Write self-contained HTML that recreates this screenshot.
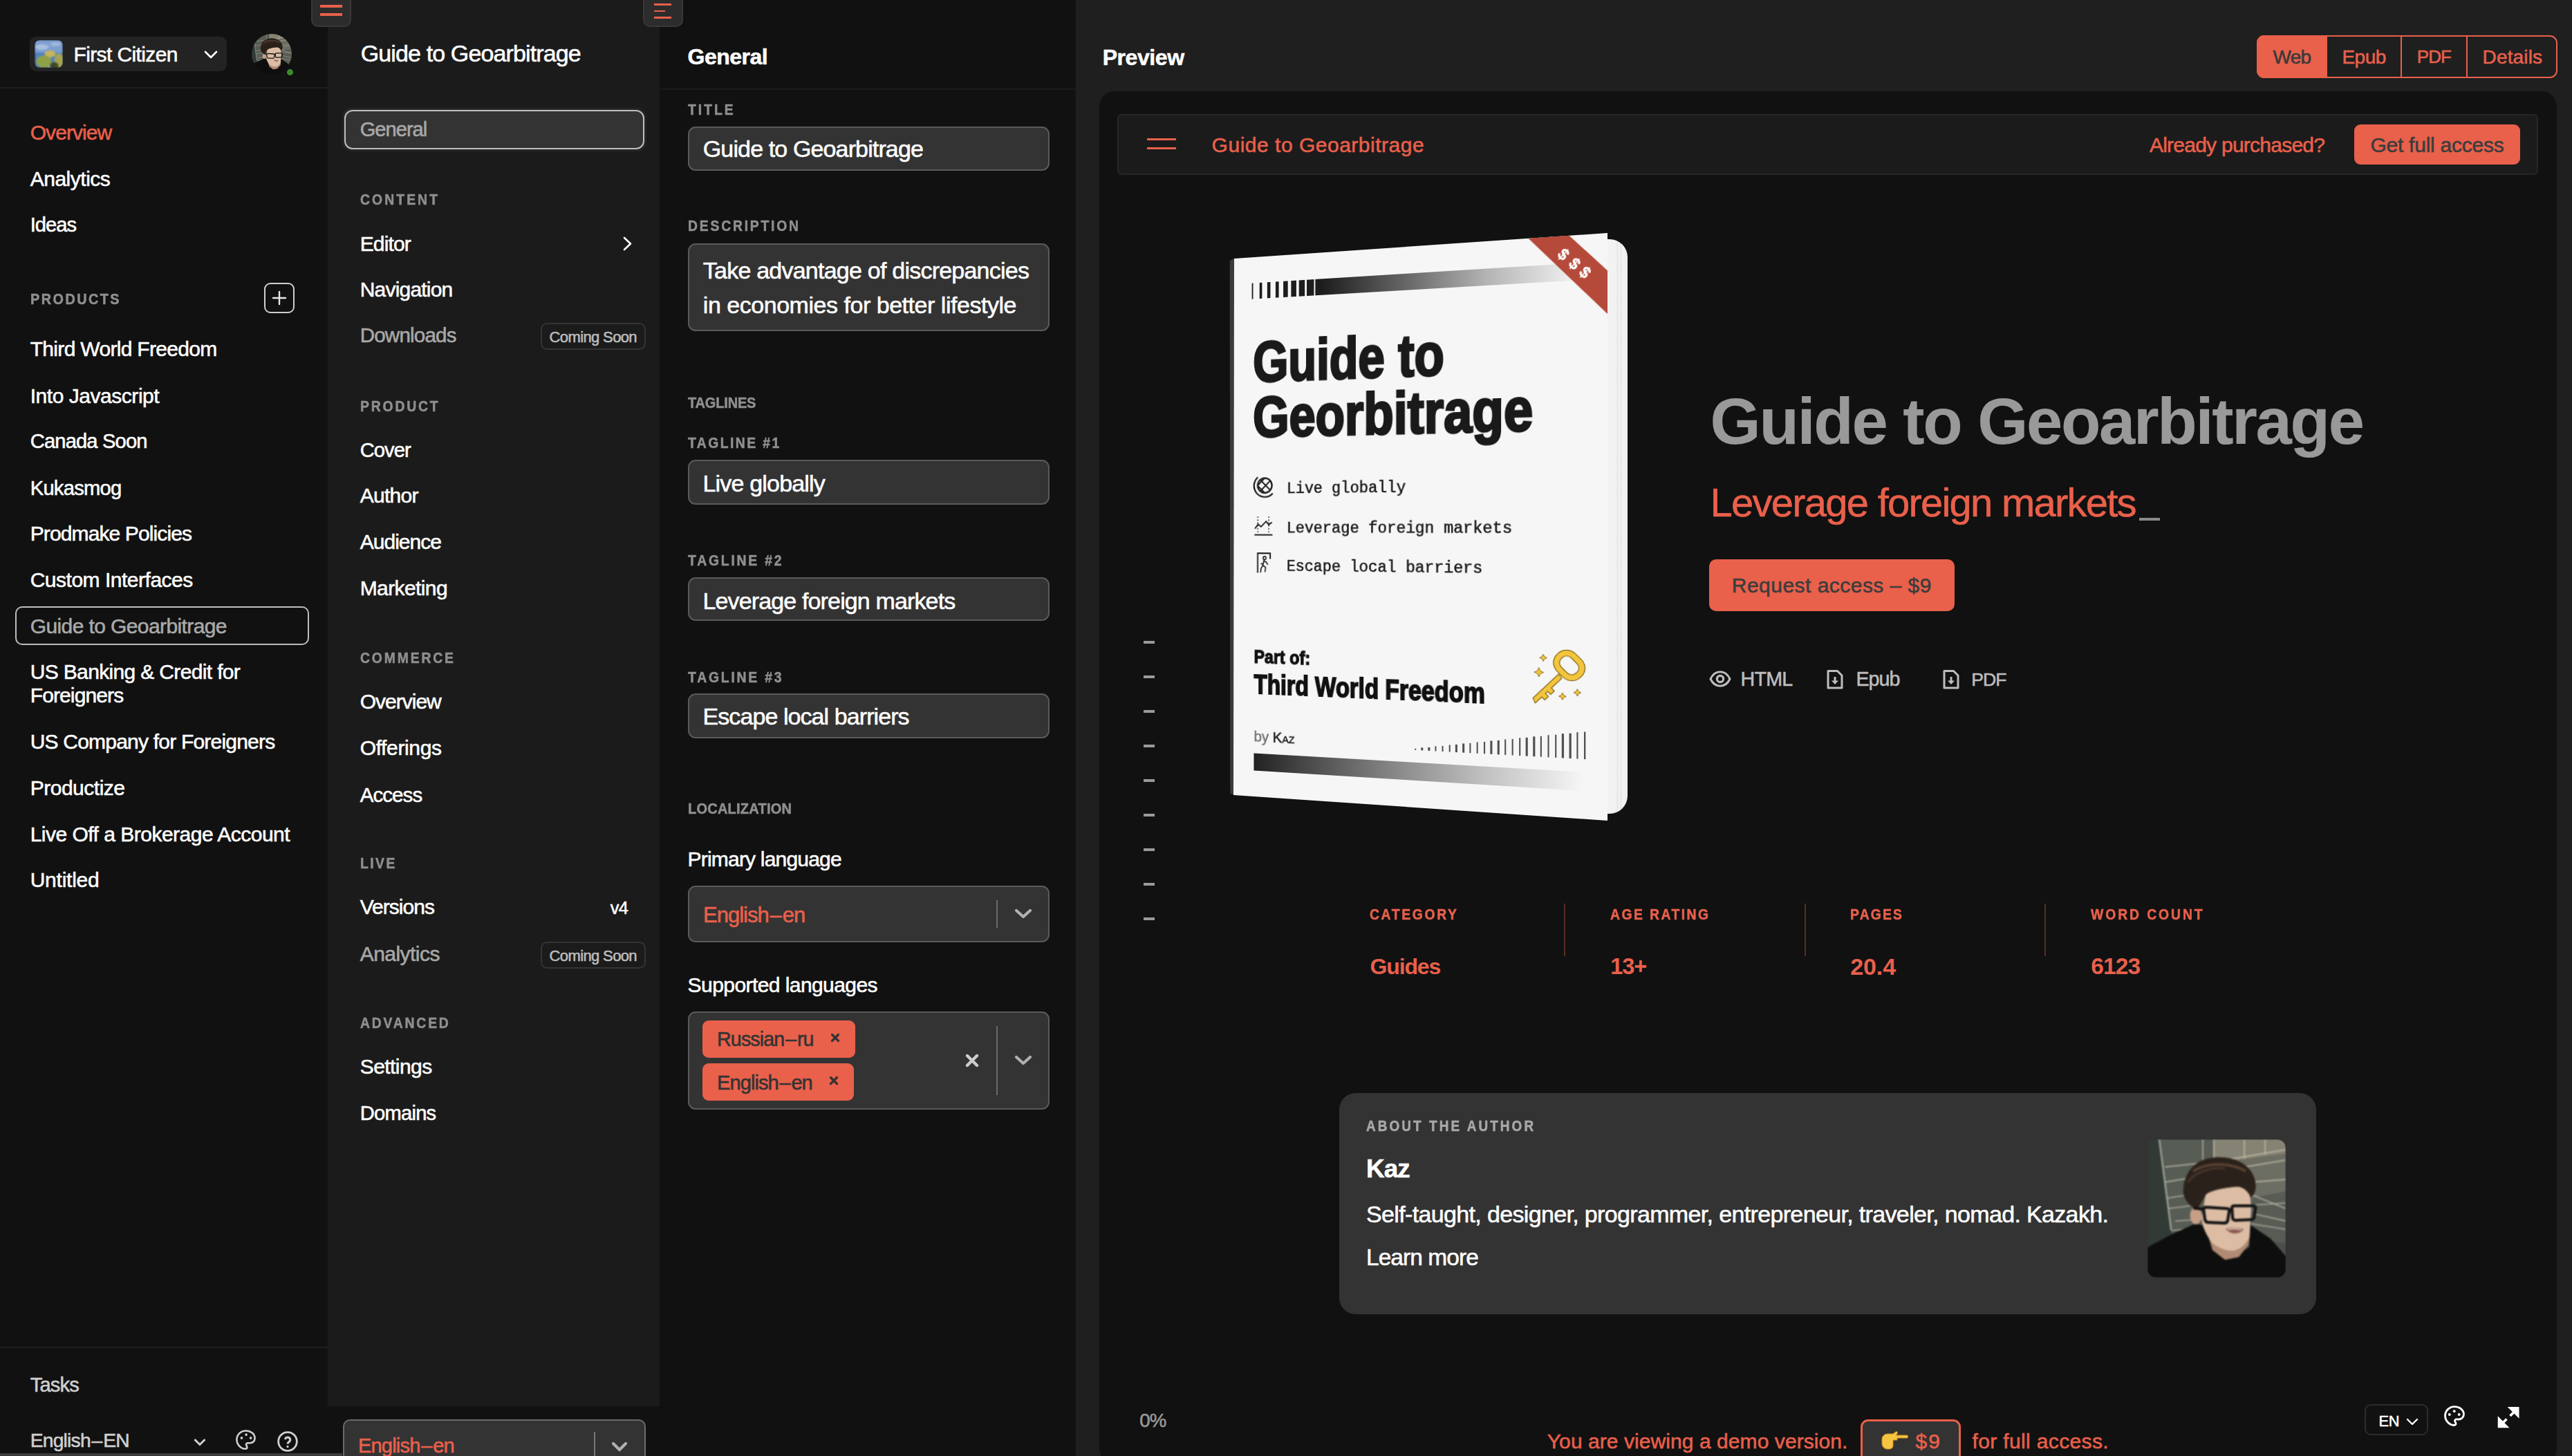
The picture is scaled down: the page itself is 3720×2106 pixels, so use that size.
<!DOCTYPE html>
<html><head><meta charset="utf-8"><title>Guide to Geoarbitrage</title>
<style>
html,body{margin:0;padding:0;width:3720px;height:2106px;overflow:hidden;background:#111;}
body{position:relative;font-family:"Liberation Sans",sans-serif;}
.t{position:absolute;line-height:1;white-space:nowrap;-webkit-text-stroke:0.55px currentColor;}
.b{position:absolute;}
.s{position:absolute;overflow:visible;}
.covwrap{position:absolute;left:0;top:0;width:540px;height:812px;transform-origin:0 0;will-change:transform;}
.cov{position:absolute;left:0;top:0;width:540px;height:812px;overflow:hidden;}
</style></head><body>
<svg class="s" style="left:0;top:0;width:0;height:0"><defs>
<filter id="bl" x="-10%" y="-10%" width="120%" height="120%"><feGaussianBlur stdDeviation="1.6"/></filter>
<symbol id="kaz" viewBox="0 0 200 200">
<rect width="200" height="200" fill="#4b504a"/>
<path d="M17 0H200V150L34 131Z" fill="#575c55"/>
<path d="M95 0H200V70L95 62Z" fill="#858373"/>
<path d="M130 30L200 20V75L150 85Z" fill="#6d6e63"/>
<g stroke="#d2cdb8" stroke-width="1.4" fill="none" opacity="0.85">
<path d="M80 0V35M96 0V30M140 0V28M170 0V22M25 40L100 32L200 15M25 62L95 50M110 45L200 30M28 85L60 80M150 62L200 58M150 80L200 100M30 100L62 96M150 95L200 92M155 108L200 118M150 122L200 130M40 118L72 116M35 132L70 128"/>
</g>
<path d="M0 0H17L34.3 131.4L30 200H0Z" fill="#323a35"/>
<path d="M17 0L34.3 131.4" stroke="#a7ada2" stroke-width="2.2"/>
<path d="M0 156L34 137.5L69 122L79 124L92 148L122 171L147 156L149 124L178 143.5L200 169V200H0Z" fill="#0e0e0e"/>
<path d="M88 140L94 160L112 174L132 170L146 152L148 132Z" fill="#b08a72"/>
<path d="M84 80C95 72 125 66 147 70L150 98L147 142C140 155 130 161 120 161C108 160 97 153 92 148C85 138 79 126 78 114Z" fill="#dcbda4"/>
<ellipse cx="70" cy="110" rx="8.5" ry="13" fill="#c79f86"/>
<path d="M52 80C50 52 66 28 98 26C128 24 152 38 156 62C158 72 154 82 149 84C146 76 140 70 130 68C116 70 96 72 86 78C80 86 76 96 72 100C64 99 56 92 52 80Z" fill="#2b211b"/>
<path d="M66 46C84 34 118 32 142 46" stroke="#57402f" stroke-width="4" fill="none"/>
<path d="M58 62C70 46 92 40 112 42" stroke="#46352a" stroke-width="3" fill="none"/>
<g fill="none" stroke="#131313" stroke-width="4.2"><path d="M81 101Q81 98 85 98L115 100Q119 100 118 104L116 117Q115 121 111 121L88 120Q84 120 83 116Z"/><path d="M122 99Q122 96 126 96L153 96Q157 96 156 100L154 113Q153 116 149 116L128 117Q124 117 123 114Z"/><path d="M118 104L122 102M81 101L66 99"/></g>
<path d="M113 129C120 127 132 127 139 130C134 137 120 139 113 129Z" fill="#8f5b50"/>
<path d="M116 130C122 129 131 129 136 131" stroke="#e8dcd0" stroke-width="1.6" fill="none"/>
</symbol>
<symbol id="palm" viewBox="0 0 40 40">
<rect width="40" height="40" fill="#4f82bf"/>
<rect width="40" height="18" fill="#7d9fd0"/>
<ellipse cx="10" cy="10" rx="10" ry="4" fill="#a9bfdf"/>
<ellipse cx="30" cy="6" rx="8" ry="3" fill="#9fb7db"/>
<path d="M20 40L22 20" stroke="#d5d2b8" stroke-width="1.5"/>
<ellipse cx="22" cy="20" rx="8" ry="5" fill="#c9b45a"/>
<ellipse cx="13" cy="31" rx="11" ry="9" fill="#8fa148"/>
<ellipse cx="35" cy="30" rx="7" ry="11" fill="#a5a357"/>
<ellipse cx="28" cy="37" rx="6" ry="5" fill="#3d4a22"/>
</symbol>
</defs></svg>
<div class="b" style="left:0.0px;top:0.0px;width:474.0px;height:2106.0px;background:#111111"></div>
<div class="b" style="left:474.0px;top:0.0px;width:480.0px;height:2034.0px;background:#1b1b1b"></div>
<div class="b" style="left:474.0px;top:2034.0px;width:480.0px;height:72.0px;background:#111111"></div>
<div class="b" style="left:954.0px;top:0.0px;width:602.0px;height:2106.0px;background:#111111"></div>
<div class="b" style="left:1556.0px;top:0.0px;width:2164.0px;height:2106.0px;background:#1f1f1f"></div>
<div class="b" style="left:0.0px;top:126.0px;width:474.0px;height:2.0px;background:#1d1d1d"></div>
<div class="b" style="left:0.0px;top:1948.0px;width:474.0px;height:2.0px;background:#1d1d1d"></div>
<div class="b" style="left:43.0px;top:52.5px;width:284.5px;height:50.0px;background:#232323;border-radius:9px"></div>
<div class="b" style="left:50px;top:58px;width:41px;height:40px;border-radius:8px;overflow:hidden"><div style="filter:blur(0.8px);width:41px;height:40px"><svg width="41" height="40"><use href="#palm" width="41" height="40"/></svg></div></div>
<div class="t" style="left:106.5px;top:63.9px;font-size:30px;color:#fff;font-weight:400;letter-spacing:-0.62px;">First Citizen</div>
<svg class="s" style="left:294px;top:72px" width="22" height="14" viewBox="0 0 22 14"><path d="M3 3 L11 11 L19 3" fill="none" stroke="#fff" stroke-width="2.6" stroke-linecap="round" stroke-linejoin="round"/></svg>
<div class="b" style="left:364px;top:48.8px;width:58px;height:58px;border-radius:50%;overflow:hidden"><div style="filter:blur(0.6px);width:58px;height:58px"><svg width="58" height="58" viewBox="10 5 190 190"><use href="#kaz" width="200" height="200"/></svg></div></div>
<div class="b" style="left:412.5px;top:97.5px;width:13.0px;height:13.0px;border-radius:50%;background:#3a8a2a;border:2px solid #111;box-sizing:border-box"></div>
<div class="t" style="left:43.7px;top:177.2px;font-size:30px;color:#e9604b;font-weight:400;letter-spacing:-0.93px;">Overview</div>
<div class="t" style="left:43.7px;top:244.0px;font-size:30px;color:#fff;font-weight:400;letter-spacing:-0.49px;">Analytics</div>
<div class="t" style="left:43.7px;top:311.3px;font-size:29.11px;color:#fff;font-weight:400;letter-spacing:-0.93px;">Ideas</div>
<div class="t" style="left:44.0px;top:421.8px;font-size:22px;color:#8f8f8f;font-weight:700;letter-spacing:2.77px;transform:scaleX(0.900);transform-origin:0.0px 0;">PRODUCTS</div>
<div class="b" style="left:381.5px;top:408.5px;width:44.0px;height:44.0px;border:2px solid #cfcfcf;border-radius:9px;box-sizing:border-box"></div>
<svg class="s" style="left:391.5px;top:418.5px" width="24" height="24" viewBox="0 0 24 24"><path d="M12 3V21M3 12H21" stroke="#e8e8e8" stroke-width="2.4" stroke-linecap="round"/></svg>
<div class="t" style="left:43.7px;top:490.3px;font-size:30px;color:#fff;font-weight:400;letter-spacing:-0.68px;">Third World Freedom</div>
<div class="t" style="left:43.7px;top:557.5px;font-size:30px;color:#fff;font-weight:400;letter-spacing:-0.46px;">Into Javascript</div>
<div class="t" style="left:43.7px;top:624.3px;font-size:29.11px;color:#fff;font-weight:400;letter-spacing:-0.82px;">Canada Soon</div>
<div class="t" style="left:43.7px;top:691.5px;font-size:29.11px;color:#fff;font-weight:400;letter-spacing:-0.71px;">Kukasmog</div>
<div class="t" style="left:43.7px;top:757.2px;font-size:30px;color:#fff;font-weight:400;letter-spacing:-0.88px;">Prodmake Policies</div>
<div class="t" style="left:43.7px;top:824.4px;font-size:30px;color:#fff;font-weight:400;letter-spacing:-0.49px;">Custom Interfaces</div>
<div class="b" style="left:22.4px;top:876.7px;width:424.8px;height:56.0px;border:2px solid #bdbdbd;border-radius:10px;box-sizing:border-box"></div>
<div class="t" style="left:43.7px;top:890.5px;font-size:30px;color:#a9a9a9;font-weight:400;letter-spacing:-0.60px;">Guide to Geoarbitrage</div>
<div class="t" style="left:43.7px;top:956.9px;font-size:30px;color:#fff;font-weight:400;letter-spacing:-0.65px;">US Banking &amp; Credit for</div>
<div class="t" style="left:43.7px;top:991.2px;font-size:30px;color:#fff;font-weight:400;letter-spacing:-0.88px;">Foreigners</div>
<div class="t" style="left:43.7px;top:1057.7px;font-size:30px;color:#fff;font-weight:400;letter-spacing:-0.79px;">US Company for Foreigners</div>
<div class="t" style="left:43.7px;top:1124.9px;font-size:30px;color:#fff;font-weight:400;letter-spacing:-0.49px;">Productize</div>
<div class="t" style="left:43.7px;top:1192.1px;font-size:30px;color:#fff;font-weight:400;letter-spacing:-0.51px;">Live Off a Brokerage Account</div>
<div class="t" style="left:43.7px;top:1257.8px;font-size:30px;color:#fff;font-weight:400;letter-spacing:-0.24px;">Untitled</div>
<div class="t" style="left:43.7px;top:1988.5px;font-size:29.11px;color:#cfcfcf;font-weight:400;letter-spacing:-0.85px;">Tasks</div>
<div class="t" style="left:43.7px;top:2069.0px;font-size:28.24px;color:#cfcfcf;font-weight:400;letter-spacing:-0.77px;">English<span style="margin:0 1.7px">–</span>EN</div>
<svg class="s" style="left:278px;top:2078px" width="22" height="16" viewBox="0 0 22 16"><path d="M3.5 4 L11 11.5 L18.5 4" fill="none" stroke="#cfcfcf" stroke-width="3"/></svg>
<svg class="s" style="left:339px;top:2066px" width="33" height="33" viewBox="0 0 24 24"><path d="M12 2.5C6.8 2.5 2.5 6.6 2.5 11.8c0 5.1 4.2 9.7 9 9.7 1.3 0 1.9-.8 1.9-1.7 0-.5-.2-.9-.5-1.3-.3-.4-.5-.8-.5-1.3 0-1 .8-1.7 1.8-1.7h2.2c2.9 0 5.1-2.3 5.1-5.2C21.5 6 17.3 2.5 12 2.5z" fill="none" stroke="#cfcfcf" stroke-width="1.9"/><circle cx="7.6" cy="10.1" r="1.35" fill="#cfcfcf"/><circle cx="12.4" cy="6.6" r="1.35" fill="#cfcfcf"/><circle cx="17.2" cy="10.1" r="1.35" fill="#cfcfcf"/></svg>
<svg class="s" style="left:400px;top:2069px" width="32" height="32" viewBox="0 0 24 24"><circle cx="12" cy="12" r="10" fill="none" stroke="#cfcfcf" stroke-width="2.1"/><path d="M9.3 9.6a2.8 2.8 0 0 1 5.5.8c0 1.9-2.8 2.4-2.8 4.2" fill="none" stroke="#cfcfcf" stroke-width="2.3"/><circle cx="12" cy="17.6" r="1.2" fill="#cfcfcf"/></svg>
<div class="b" style="left:0.0px;top:2102.0px;width:495.0px;height:4.0px;background:#3a3a3a"></div>
<div class="b" style="left:450.3px;top:-12.0px;width:57.7px;height:50.5px;background:#2c2c2c;border:2px solid #383838;border-radius:10px;box-sizing:border-box"></div>
<div class="b" style="left:463.0px;top:7.0px;width:32.0px;height:4.0px;background:#e9604b"></div>
<div class="b" style="left:463.0px;top:19.0px;width:32.0px;height:4.0px;background:#e9604b"></div>
<div class="b" style="left:930.0px;top:-12.0px;width:58.0px;height:50.5px;background:#2c2c2c;border:2px solid #383838;border-radius:10px;box-sizing:border-box"></div>
<div class="b" style="left:946.0px;top:5.0px;width:24.5px;height:2.7px;background:#e9604b"></div>
<div class="b" style="left:946.0px;top:14.7px;width:16.0px;height:2.8px;background:#e9604b"></div>
<div class="b" style="left:946.0px;top:23.8px;width:24.5px;height:2.8px;background:#e9604b"></div>
<div class="t" style="left:521.7px;top:60.3px;font-size:34px;color:#fff;font-weight:400;letter-spacing:-0.87px;">Guide to Geoarbitrage</div>
<div class="b" style="left:495.4px;top:156.0px;width:439.6px;height:62.5px;background:#262626;border-radius:14px"></div>
<div class="b" style="left:498.0px;top:158.8px;width:433.7px;height:57.2px;background:#333;border:2px solid #bfbfbf;border-radius:12px;box-sizing:border-box"></div>
<div class="t" style="left:520.7px;top:173.2px;font-size:29.11px;color:#a8a8a8;font-weight:400;letter-spacing:-1.00px;">General</div>
<div class="t" style="left:520.7px;top:278.7px;font-size:21.5px;color:#8f8f8f;font-weight:700;letter-spacing:3.42px;transform:scaleX(0.900);transform-origin:0.0px 0;">CONTENT</div>
<div class="t" style="left:520.7px;top:338.0px;font-size:30px;color:#fff;font-weight:400;letter-spacing:-0.84px;">Editor</div>
<svg class="s" style="left:899px;top:341px" width="18" height="23" viewBox="0 0 18 23"><path d="M4 3 L13 11.5 L4 20" fill="none" stroke="#fff" stroke-width="2.6" stroke-linecap="round" stroke-linejoin="round"/></svg>
<div class="t" style="left:520.7px;top:403.5px;font-size:30px;color:#fff;font-weight:400;letter-spacing:-0.80px;">Navigation</div>
<div class="t" style="left:520.7px;top:470.3px;font-size:29.55px;color:#a8a8a8;font-weight:400;letter-spacing:-0.80px;">Downloads</div>
<div class="b" style="left:782.2px;top:467.4px;width:152.2px;height:39.0px;border:2px solid #343434;border-radius:9px;box-sizing:border-box"></div>
<div class="t" style="left:794.6px;top:477.3px;font-size:22px;color:#bdbdbd;font-weight:400;letter-spacing:-0.63px;">Coming Soon</div>
<div class="t" style="left:520.7px;top:577.7px;font-size:21.5px;color:#8f8f8f;font-weight:700;letter-spacing:3.15px;transform:scaleX(0.900);transform-origin:0.0px 0;">PRODUCT</div>
<div class="t" style="left:520.7px;top:637.3px;font-size:29.11px;color:#fff;font-weight:400;letter-spacing:-0.92px;">Cover</div>
<div class="t" style="left:520.7px;top:701.9px;font-size:30px;color:#fff;font-weight:400;letter-spacing:-0.72px;">Author</div>
<div class="t" style="left:520.7px;top:769.1px;font-size:30px;color:#fff;font-weight:400;letter-spacing:-0.97px;">Audience</div>
<div class="t" style="left:520.7px;top:835.5px;font-size:30px;color:#fff;font-weight:400;letter-spacing:-0.60px;">Marketing</div>
<div class="t" style="left:520.7px;top:941.7px;font-size:21.5px;color:#8f8f8f;font-weight:700;letter-spacing:3.17px;transform:scaleX(0.900);transform-origin:0.0px 0;">COMMERCE</div>
<div class="t" style="left:520.7px;top:999.8px;font-size:30px;color:#fff;font-weight:400;letter-spacing:-0.99px;">Overview</div>
<div class="t" style="left:520.7px;top:1067.0px;font-size:30px;color:#fff;font-weight:400;letter-spacing:-0.36px;">Offerings</div>
<div class="t" style="left:520.7px;top:1134.6px;font-size:29.55px;color:#fff;font-weight:400;letter-spacing:-0.94px;">Access</div>
<div class="t" style="left:520.7px;top:1239.2px;font-size:21.5px;color:#8f8f8f;font-weight:700;letter-spacing:2.73px;transform:scaleX(0.900);transform-origin:0.0px 0;">LIVE</div>
<div class="t" style="left:520.7px;top:1297.3px;font-size:30px;color:#fff;font-weight:400;letter-spacing:-0.97px;">Versions</div>
<div class="t" style="left:882.8px;top:1301.2px;font-size:25.41px;color:#fff;font-weight:400;letter-spacing:-0.70px;">v4</div>
<div class="t" style="left:520.7px;top:1364.9px;font-size:30px;color:#a8a8a8;font-weight:400;letter-spacing:-0.54px;">Analytics</div>
<div class="b" style="left:782.2px;top:1362.0px;width:152.2px;height:38.5px;border:2px solid #343434;border-radius:9px;box-sizing:border-box"></div>
<div class="t" style="left:794.6px;top:1372.3px;font-size:22px;color:#bdbdbd;font-weight:400;letter-spacing:-0.63px;">Coming Soon</div>
<div class="t" style="left:520.7px;top:1470.1px;font-size:21.5px;color:#8f8f8f;font-weight:700;letter-spacing:3.11px;transform:scaleX(0.900);transform-origin:0.0px 0;">ADVANCED</div>
<div class="t" style="left:520.7px;top:1528.4px;font-size:30px;color:#fff;font-weight:400;letter-spacing:-0.56px;">Settings</div>
<div class="t" style="left:520.7px;top:1595.8px;font-size:29.11px;color:#fff;font-weight:400;letter-spacing:-0.73px;">Domains</div>
<div class="b" style="left:495.7px;top:2053.0px;width:438.6px;height:87.0px;background:#333;border:2px solid #6a6a6a;border-radius:10px;box-sizing:border-box"></div>
<div class="t" style="left:517.9px;top:2077.3px;font-size:29.11px;color:#e9604b;font-weight:400;letter-spacing:-0.84px;">English<span style="margin:0 1.7px">–</span>en</div>
<div class="b" style="left:858.6px;top:2071.0px;width:2.0px;height:35.0px;background:#777"></div>
<svg class="s" style="left:882.5px;top:2084.5px" width="26" height="16" viewBox="0 0 26 16"><path d="M4 3 L13 12 L22 3" fill="none" stroke="#b0b0b0" stroke-width="4.2" stroke-linecap="round" stroke-linejoin="round"/></svg>
<div class="t" style="left:994.6px;top:66.3px;font-size:32px;color:#fff;font-weight:700;letter-spacing:-0.53px;">General</div>
<div class="b" style="left:955.6px;top:128.0px;width:600.4px;height:2.0px;background:#1c1c1c"></div>
<div class="t" style="left:994.6px;top:148.7px;font-size:21.5px;color:#8f8f8f;font-weight:700;letter-spacing:3.30px;transform:scaleX(0.900);transform-origin:0.0px 0;">TITLE</div>
<div class="b" style="left:994.6px;top:182.9px;width:523.0px;height:64.5px;background:#333;border:2px solid #5a5a5a;border-radius:11px;box-sizing:border-box"></div>
<div class="t" style="left:1016.8px;top:198.1px;font-size:34px;color:#fff;font-weight:400;letter-spacing:-0.87px;">Guide to Geoarbitrage</div>
<div class="t" style="left:994.6px;top:317.4px;font-size:21.5px;color:#8f8f8f;font-weight:700;letter-spacing:3.09px;transform:scaleX(0.900);transform-origin:0.0px 0;">DESCRIPTION</div>
<div class="b" style="left:994.6px;top:351.6px;width:523.0px;height:127.6px;background:#333;border:2px solid #5a5a5a;border-radius:11px;box-sizing:border-box"></div>
<div class="t" style="left:1016.8px;top:373.5px;font-size:34px;color:#fff;font-weight:400;letter-spacing:-0.77px;">Take advantage of discrepancies</div>
<div class="t" style="left:1016.8px;top:423.6px;font-size:34px;color:#fff;font-weight:400;letter-spacing:-0.47px;">in economies for better lifestyle</div>
<div class="t" style="left:994.6px;top:572.7px;font-size:21.5px;color:#8f8f8f;font-weight:700;letter-spacing:-0.18px;transform:scaleX(0.930);transform-origin:0.0px 0;">TAGLINES</div>
<div class="t" style="left:994.6px;top:631.2px;font-size:21.5px;color:#8f8f8f;font-weight:700;letter-spacing:2.70px;transform:scaleX(0.900);transform-origin:0.0px 0;">TAGLINE #1</div>
<div class="b" style="left:994.6px;top:665.4px;width:523.0px;height:65.0px;background:#333;border:2px solid #5a5a5a;border-radius:11px;box-sizing:border-box"></div>
<div class="t" style="left:1016.5px;top:681.6px;font-size:34px;color:#fff;font-weight:400;letter-spacing:-0.82px;">Live globally</div>
<div class="t" style="left:994.6px;top:800.5px;font-size:21.5px;color:#8f8f8f;font-weight:700;letter-spacing:3.10px;transform:scaleX(0.900);transform-origin:0.0px 0;">TAGLINE #2</div>
<div class="b" style="left:994.6px;top:834.8px;width:523.0px;height:63.7px;background:#333;border:2px solid #5a5a5a;border-radius:11px;box-sizing:border-box"></div>
<div class="t" style="left:1016.5px;top:851.7px;font-size:34px;color:#fff;font-weight:400;letter-spacing:-0.86px;">Leverage foreign markets</div>
<div class="t" style="left:994.6px;top:969.7px;font-size:21.5px;color:#8f8f8f;font-weight:700;letter-spacing:3.10px;transform:scaleX(0.900);transform-origin:0.0px 0;">TAGLINE #3</div>
<div class="b" style="left:994.6px;top:1003.3px;width:523.0px;height:64.6px;background:#333;border:2px solid #5a5a5a;border-radius:11px;box-sizing:border-box"></div>
<div class="t" style="left:1016.5px;top:1019.1px;font-size:34px;color:#fff;font-weight:400;letter-spacing:-0.92px;">Escape local barriers</div>
<div class="t" style="left:994.6px;top:1160.3px;font-size:21.5px;color:#8f8f8f;font-weight:700;letter-spacing:0.26px;transform:scaleX(0.930);transform-origin:0.0px 0;">LOCALIZATION</div>
<div class="t" style="left:994.6px;top:1228.4px;font-size:30px;color:#fff;font-weight:400;letter-spacing:-0.81px;">Primary language</div>
<div class="b" style="left:994.6px;top:1280.6px;width:523.0px;height:82.7px;background:#333;border:2px solid #5a5a5a;border-radius:11px;box-sizing:border-box"></div>
<div class="t" style="left:1017.0px;top:1307.9px;font-size:31.05px;color:#e9604b;font-weight:400;letter-spacing:-1.03px;">English<span style="margin:0 1.9px">–</span>en</div>
<div class="b" style="left:1441.4px;top:1302.0px;width:2.0px;height:39.7px;background:#6a6a6a"></div>
<svg class="s" style="left:1466px;top:1312px" width="28" height="20" viewBox="0 0 28 20"><path d="M4 5 L14 14 L24 5" fill="none" stroke="#b0b0b0" stroke-width="4.2" stroke-linecap="round" stroke-linejoin="round"/></svg>
<div class="t" style="left:994.6px;top:1410.1px;font-size:30px;color:#fff;font-weight:400;letter-spacing:-0.57px;">Supported languages</div>
<div class="b" style="left:994.6px;top:1462.6px;width:523.0px;height:142.4px;background:#333;border:2px solid #5a5a5a;border-radius:11px;box-sizing:border-box"></div>
<div class="b" style="left:1016.0px;top:1476.3px;width:220.6px;height:53.7px;background:#e9604b;border-radius:9px"></div>
<div class="t" style="left:1037.0px;top:1489.0px;font-size:28.67px;color:#333;font-weight:400;letter-spacing:-0.87px;">Russian<span style="margin:0 1.7px">–</span>ru</div>
<svg class="s" style="left:1200px;top:1493px" width="16" height="16" viewBox="0 0 16 16"><path d="M3.5 3.5L12.5 12.5M12.5 3.5L3.5 12.5" stroke="#333" stroke-width="3.2" stroke-linecap="round"/></svg>
<div class="b" style="left:1016.0px;top:1538.3px;width:218.8px;height:53.7px;background:#e9604b;border-radius:9px"></div>
<div class="t" style="left:1037.0px;top:1551.8px;font-size:29.11px;color:#333;font-weight:400;letter-spacing:-0.96px;">English<span style="margin:0 1.7px">–</span>en</div>
<svg class="s" style="left:1198px;top:1555px" width="16" height="16" viewBox="0 0 16 16"><path d="M3.5 3.5L12.5 12.5M12.5 3.5L3.5 12.5" stroke="#333" stroke-width="3.2" stroke-linecap="round"/></svg>
<svg class="s" style="left:1393px;top:1521px" width="26" height="26" viewBox="0 0 26 26"><path d="M6 6L20 20M20 6L6 20" stroke="#cdcdcd" stroke-width="4.4" stroke-linecap="round"/></svg>
<div class="b" style="left:1441.4px;top:1483.8px;width:2.0px;height:100.1px;background:#6a6a6a"></div>
<svg class="s" style="left:1466px;top:1524px" width="28" height="20" viewBox="0 0 28 20"><path d="M4 5 L14 14 L24 5" fill="none" stroke="#b0b0b0" stroke-width="4.2" stroke-linecap="round" stroke-linejoin="round"/></svg>
<div class="t" style="left:1594.7px;top:66.8px;font-size:32px;color:#fff;font-weight:700;letter-spacing:-0.43px;">Preview</div>
<div class="b" style="left:3263.9px;top:50.9px;width:435.6px;height:62.1px;border:2px solid #e9604b;border-radius:11px;box-sizing:border-box;overflow:hidden"></div>
<div class="b" style="left:3263.9px;top:50.9px;width:102.3px;height:62.1px;background:#e9604b;border-radius:11px 0 0 11px"></div>
<div class="b" style="left:3472.0px;top:50.9px;width:2.0px;height:62.1px;background:#e9604b"></div>
<div class="b" style="left:3566.7px;top:50.9px;width:2.0px;height:62.1px;background:#e9604b"></div>
<div class="t" style="left:3287.6px;top:68.7px;font-size:28px;color:#3a3a3a;font-weight:400;letter-spacing:-0.85px;">Web</div>
<div class="t" style="left:3387.4px;top:68.7px;font-size:28px;color:#e9604b;font-weight:400;letter-spacing:-0.47px;">Epub</div>
<div class="t" style="left:3495.7px;top:70.4px;font-size:25.96px;color:#e9604b;font-weight:400;letter-spacing:-0.85px;">PDF</div>
<div class="t" style="left:3590.5px;top:68.7px;font-size:28px;color:#e9604b;font-weight:400;letter-spacing:0.17px;">Details</div>
<div class="b" style="left:1590.0px;top:131.7px;width:2108.0px;height:1985.3px;background:#111111;border-radius:22px"></div>
<div class="b" style="left:1616.0px;top:164.7px;width:2055.3px;height:88.5px;background:#1b1b1b;border:2px solid #262626;border-radius:6px;box-sizing:border-box"></div>
<div class="b" style="left:1659.0px;top:200.4px;width:42.0px;height:2.6px;background:#e9604b"></div>
<div class="b" style="left:1659.0px;top:213.3px;width:42.0px;height:2.6px;background:#e9604b"></div>
<div class="t" style="left:1752.6px;top:194.8px;font-size:30px;color:#e9604b;font-weight:400;letter-spacing:0.51px;">Guide to Geoarbitrage</div>
<div class="t" style="left:3108.9px;top:194.8px;font-size:30px;color:#e9604b;font-weight:400;letter-spacing:-0.75px;">Already purchased?</div>
<div class="b" style="left:3405.0px;top:180.0px;width:240.0px;height:58.0px;background:#e9604b;border-radius:9px"></div>
<div class="t" style="left:3428.4px;top:194.8px;font-size:30px;color:#3c3c3c;font-weight:400;letter-spacing:-0.24px;">Get full access</div>
<div class="b" style="left:1654.2px;top:926.9px;width:15.8px;height:4.4px;background:#9a9a9a"></div>
<div class="b" style="left:1654.2px;top:976.9px;width:15.8px;height:4.4px;background:#9a9a9a"></div>
<div class="b" style="left:1654.2px;top:1026.9px;width:15.8px;height:4.4px;background:#9a9a9a"></div>
<div class="b" style="left:1654.2px;top:1076.9px;width:15.8px;height:4.4px;background:#9a9a9a"></div>
<div class="b" style="left:1654.2px;top:1126.9px;width:15.8px;height:4.4px;background:#9a9a9a"></div>
<div class="b" style="left:1654.2px;top:1176.9px;width:15.8px;height:4.4px;background:#9a9a9a"></div>
<div class="b" style="left:1654.2px;top:1226.9px;width:15.8px;height:4.4px;background:#9a9a9a"></div>
<div class="b" style="left:1654.2px;top:1276.9px;width:15.8px;height:4.4px;background:#9a9a9a"></div>
<div class="b" style="left:1654.2px;top:1326.9px;width:15.8px;height:4.4px;background:#9a9a9a"></div>
<div class="b" style="left:2290.0px;top:346.0px;width:64.0px;height:831.0px;background:linear-gradient(90deg,#f2f2f2 0%,#f2f2f2 75%,#e2e2e2 77%,#f4f4f4 80%,#e6e6e6 86%,#f4f4f4 88%,#ececec 100%);border-radius:0 26px 26px 0"></div>
<svg class="s" style="left:0;top:0" width="3720" height="2106"><polygon points="1778.7,377 1785,374 1784.5,1150 1779.3,1147.6" fill="#3b3b3b"/><polygon points="1785,374 2325,337 2325,1187 1784,1150" fill="#f6f6f6"/></svg>
<div class="covwrap" style="transform:matrix3d(0.62550983,-0.12279946,0,-0.00016107104,-0.0052926066,0.95304718,0,-2.2763896e-06,0,0,1,0,1785,374,0,1)"><div class="cov"><div class="b" style="left:28.0px;top:39.0px;width:2.2px;height:24px;background:#1d1d1d"></div><div class="b" style="left:40.2px;top:39.0px;width:3.4px;height:24px;background:#1d1d1d"></div><div class="b" style="left:52.4px;top:39.0px;width:4.5px;height:24px;background:#1d1d1d"></div><div class="b" style="left:64.6px;top:39.0px;width:5.7px;height:24px;background:#1d1d1d"></div><div class="b" style="left:76.8px;top:39.0px;width:6.8px;height:24px;background:#1d1d1d"></div><div class="b" style="left:89.0px;top:39.0px;width:8.0px;height:24px;background:#1d1d1d"></div><div class="b" style="left:101.2px;top:39.0px;width:9.1px;height:24px;background:#1d1d1d"></div><div class="b" style="left:113.4px;top:39.0px;width:10.2px;height:24px;background:#1d1d1d"></div><div class="b" style="left:125.6px;top:39.0px;width:11.4px;height:24px;background:#1d1d1d"></div><div class="b" style="left:136px;top:39px;width:372px;height:24px;background:linear-gradient(90deg,#1d1d1d 0%,#6a6a6a 35%,#b5b5b5 65%,#f6f6f6 100%)"></div><svg class="s" style="left:0;top:0" width="540" height="812"><polygon points="433.5,0 489,0 540,52 540,112" fill="#b64a3a"/></svg><div class="t" style="left:471.0px;top:14.5px;width:20px;text-align:center;font-size:22px;font-weight:700;color:#fff;transform:rotate(45deg)">$</div><div class="t" style="left:485.5px;top:29.0px;width:20px;text-align:center;font-size:22px;font-weight:700;color:#fff;transform:rotate(45deg)">$</div><div class="t" style="left:499.5px;top:42.0px;width:20px;text-align:center;font-size:22px;font-weight:700;color:#fff;transform:rotate(45deg)">$</div><div class="t" style="left:30.0px;top:115.4px;font-size:86px;font-weight:700;color:#1a1a1a;letter-spacing:0px;transform:scaleX(0.820);transform-origin:0 0;-webkit-text-stroke:3.2px currentColor">Guide to</div><div class="t" style="left:30.0px;top:198.4px;font-size:86px;font-weight:700;color:#1a1a1a;letter-spacing:0px;transform:scaleX(0.841);transform-origin:0 0;-webkit-text-stroke:3.2px currentColor">Georbitrage</div><svg class="s" style="left:27.7px;top:327.2px" width="38.8" height="37.8" viewBox="1810 686 36 36"><defs><clipPath id="gc"><circle cx="1829.1" cy="702.5" r="10.5"/></clipPath></defs><circle cx="1829.1" cy="702.5" r="10.6" fill="none" stroke="#1d1d1d" stroke-width="2.3"/><g clip-path="url(#gc)" stroke="#1d1d1d" stroke-width="2" fill="none"><path d="M1812 696L1836 720M1818 690L1842 714M1812 709L1836 685M1818 715L1842 691"/></g><path d="M1818.2 691.2A15 15 0 0 0 1840.2 714.6" fill="none" stroke="#1d1d1d" stroke-width="2.3" stroke-linecap="round"/></svg><svg class="s" style="left:27.8px;top:387.6px" width="36.7" height="35.3" viewBox="1810 744 34 34"><path d="M1813.7 773.4H1840.7" stroke="#1d1d1d" stroke-width="2"/><path d="M1814.4 764.4L1819.2 757.8L1823.6 761.5L1831.3 753.8L1835.2 758.8L1840 755" fill="none" stroke="#1d1d1d" stroke-width="1.9"/><path d="M1818.7 747V770M1835.2 747V770" stroke="#1d1d1d" stroke-width="1.6" stroke-dasharray="1.6 2.6"/></svg><svg class="s" style="left:30px;top:440.7px" width="34.5" height="37.1" viewBox="1812 795 32 36"><path d="M1818.7 828.6V800H1837.6V808.2" fill="none" stroke="#1d1d1d" stroke-width="2"/><circle cx="1829.1" cy="806.9" r="2.2" fill="none" stroke="#1d1d1d" stroke-width="1.7"/><path d="M1828.2 810L1826.5 817.5L1830.6 820.5L1829.8 826.6M1826.5 817.5L1823.6 822.6L1823.3 827.5M1824 815.3H1826.7L1828.2 811.2L1831.7 812.8L1833.8 816" fill="none" stroke="#1d1d1d" stroke-width="1.7" stroke-linecap="round" stroke-linejoin="round"/></svg><div class="t" style="left:82.5px;top:339.3px;font-family:'Liberation Mono';font-size:23px;color:#1d1d1d;letter-spacing:-0.1px">Live globally</div><div class="t" style="left:82.5px;top:398.0px;font-family:'Liberation Mono';font-size:23px;color:#1d1d1d;letter-spacing:-0.1px">Leverage foreign markets</div><div class="t" style="left:82.5px;top:455.4px;font-family:'Liberation Mono';font-size:23px;color:#1d1d1d;letter-spacing:-0.1px">Escape local barriers</div><div class="t" style="left:31.5px;top:587.7px;font-size:28px;font-weight:700;color:#111;letter-spacing:0px;transform:scaleX(0.888);transform-origin:0 0;-webkit-text-stroke:1.4px currentColor">Part of:</div><div class="t" style="left:31.5px;top:622.6px;font-size:41px;font-weight:700;color:#111;letter-spacing:0px;transform:scaleX(0.826);transform-origin:0 0;-webkit-text-stroke:1.8px currentColor">Third World Freedom</div><svg class="s" style="left:434px;top:579px" width="78" height="84" viewBox="0 0 78 84"><g stroke="#8a6a16" stroke-width="1.2" stroke-linejoin="round"><path d="M41 33L6 68l3 7 9-9 4 4 5-5-4-4 3-3 4 4 5-5-4-4 14-14z" fill="#f2c53d"/><rect x="37" y="7" width="36" height="27" rx="12.5" transform="rotate(45 55 20.5)" fill="none" stroke="#8a6a16" stroke-width="9.4"/><rect x="37" y="7" width="36" height="27" rx="12.5" transform="rotate(45 55 20.5)" fill="none" stroke="#f2c53d" stroke-width="7"/></g><g fill="#f2c53d" stroke="#8a6a16" stroke-width="0.9"><path d="M20 6l1.6 3.4 3.4 1.6-3.4 1.6-1.6 3.4-1.6-3.4-3.4-1.6 3.4-1.6z"/><path d="M14 25l2 4.5 4.5 2-4.5 2-2 4.5-2-4.5-4.5-2 4.5-2z"/><path d="M66 53l1.6 3.4 3.4 1.6-3.4 1.6-1.6 3.4-1.6-3.4-3.4-1.6 3.4-1.6z"/><path d="M46 59l1.6 3.4 3.4 1.6-3.4 1.6-1.6 3.4-1.6-3.4-3.4-1.6 3.4-1.6z"/></g></svg><div class="t" style="left:32px;top:711.1px;font-size:22px;color:#777">by <span style="color:#222;font-size:22px;font-variant:small-caps">Kaz</span></div><div class="b" style="left:273.5px;top:726.9px;width:2.6px;height:2.0px;background:#505050"></div><div class="b" style="left:283.3px;top:725.4px;width:2.6px;height:3.5px;background:#505050"></div><div class="b" style="left:293.1px;top:723.9px;width:2.6px;height:5.0px;background:#505050"></div><div class="b" style="left:302.9px;top:722.4px;width:2.6px;height:6.5px;background:#505050"></div><div class="b" style="left:312.7px;top:720.9px;width:2.6px;height:8.0px;background:#505050"></div><div class="b" style="left:322.5px;top:719.4px;width:2.6px;height:9.5px;background:#505050"></div><div class="b" style="left:332.3px;top:717.9px;width:2.6px;height:11.0px;background:#505050"></div><div class="b" style="left:342.1px;top:716.4px;width:2.6px;height:12.5px;background:#505050"></div><div class="b" style="left:351.9px;top:714.9px;width:2.6px;height:14.0px;background:#505050"></div><div class="b" style="left:361.7px;top:713.4px;width:2.6px;height:15.5px;background:#505050"></div><div class="b" style="left:371.5px;top:711.9px;width:2.6px;height:17.0px;background:#505050"></div><div class="b" style="left:381.3px;top:710.4px;width:2.6px;height:18.5px;background:#505050"></div><div class="b" style="left:391.1px;top:708.9px;width:2.6px;height:20.0px;background:#505050"></div><div class="b" style="left:400.9px;top:707.4px;width:2.6px;height:21.5px;background:#505050"></div><div class="b" style="left:410.7px;top:705.9px;width:2.6px;height:23.0px;background:#505050"></div><div class="b" style="left:420.5px;top:704.4px;width:2.6px;height:24.5px;background:#505050"></div><div class="b" style="left:430.3px;top:702.9px;width:2.6px;height:26.0px;background:#505050"></div><div class="b" style="left:440.1px;top:701.4px;width:2.6px;height:27.5px;background:#505050"></div><div class="b" style="left:449.9px;top:699.9px;width:2.6px;height:29.0px;background:#505050"></div><div class="b" style="left:459.7px;top:698.4px;width:2.6px;height:30.5px;background:#505050"></div><div class="b" style="left:469.5px;top:696.9px;width:2.6px;height:32.0px;background:#505050"></div><div class="b" style="left:479.3px;top:695.4px;width:2.6px;height:33.5px;background:#505050"></div><div class="b" style="left:489.1px;top:693.9px;width:2.6px;height:35.0px;background:#505050"></div><div class="b" style="left:498.9px;top:692.4px;width:2.6px;height:36.5px;background:#505050"></div><div class="b" style="left:508.7px;top:690.9px;width:2.6px;height:38.0px;background:#505050"></div><div class="b" style="left:32px;top:746.5px;width:476px;height:26.5px;background:linear-gradient(90deg,#222 0%,#444 15%,#888 45%,#bdbdbd 70%,#f6f6f6 100%)"></div></div></div>
<div class="t" style="left:2473.6px;top:563.4px;font-size:94px;color:#999999;font-weight:700;letter-spacing:-2.30px;-webkit-text-stroke:0.2px currentColor;">Guide to Geoarbitrage</div>
<div class="t" style="left:2473.6px;top:697.5px;font-size:58px;color:#e9604b;font-weight:400;letter-spacing:-1.77px;">Leverage foreign markets</div>
<div class="b" style="left:3094.0px;top:748.5px;width:30.0px;height:4.0px;background:#8a8a8a"></div>
<div class="b" style="left:2471.9px;top:808.8px;width:355.0px;height:75.2px;background:#e9604b;border-radius:10px"></div>
<div class="t" style="left:2504.8px;top:831.6px;font-size:30px;color:#3c3c3c;font-weight:400;letter-spacing:0.47px;">Request access – $9</div>
<svg class="s" style="left:2471px;top:968px" width="34" height="28" viewBox="0 0 34 28"><path d="M3 14C6.5 6.5 11.5 3.8 17 3.8S27.5 6.5 31 14C27.5 21.5 22.5 24.2 17 24.2S6.5 21.5 3 14z" fill="none" stroke="#bdbdbd" stroke-width="3"/><circle cx="17" cy="14" r="4.6" fill="none" stroke="#bdbdbd" stroke-width="3.2"/></svg>
<div class="t" style="left:2517.6px;top:968.3px;font-size:28.67px;color:#bdbdbd;font-weight:400;letter-spacing:-0.80px;">HTML</div>
<svg class="s" style="left:2641px;top:968px" width="26" height="30" viewBox="0 0 26 30"><path d="M3 2.5H16.5L23 9V27H3Z" fill="none" stroke="#bdbdbd" stroke-width="3" stroke-linejoin="round"/><path d="M13 11V18" stroke="#bdbdbd" stroke-width="3"/><path d="M8 16.5H18L13 22Z" fill="#bdbdbd"/></svg>
<div class="t" style="left:2684.4px;top:968.3px;font-size:28.67px;color:#bdbdbd;font-weight:400;letter-spacing:-0.93px;">Epub</div>
<svg class="s" style="left:2809px;top:968px" width="26" height="30" viewBox="0 0 26 30"><path d="M3 2.5H16.5L23 9V27H3Z" fill="none" stroke="#bdbdbd" stroke-width="3" stroke-linejoin="round"/><path d="M13 11V18" stroke="#bdbdbd" stroke-width="3"/><path d="M8 16.5H18L13 22Z" fill="#bdbdbd"/></svg>
<div class="t" style="left:2851.2px;top:970.1px;font-size:26.59px;color:#bdbdbd;font-weight:400;letter-spacing:-0.90px;">PDF</div>
<div class="t" style="left:1981.4px;top:1313.0px;font-size:21.5px;color:#e9604b;font-weight:700;letter-spacing:2.94px;transform:scaleX(0.900);transform-origin:0.0px 0;">CATEGORY</div>
<div class="t" style="left:1981.4px;top:1382.3px;font-size:32.01px;color:#e9604b;font-weight:700;letter-spacing:-1.10px;-webkit-text-stroke:0px currentColor;">Guides</div>
<div class="t" style="left:2329.2px;top:1313.0px;font-size:21.5px;color:#e9604b;font-weight:700;letter-spacing:2.71px;transform:scaleX(0.900);transform-origin:0.0px 0;">AGE RATING</div>
<div class="t" style="left:2329.2px;top:1381.9px;font-size:32.5px;color:#e9604b;font-weight:700;letter-spacing:-1.05px;-webkit-text-stroke:0px currentColor;">13+</div>
<div class="t" style="left:2676.3px;top:1313.0px;font-size:21.5px;color:#e9604b;font-weight:700;letter-spacing:2.41px;transform:scaleX(0.900);transform-origin:0.0px 0;">PAGES</div>
<div class="t" style="left:2676.3px;top:1380.6px;font-size:34px;color:#e9604b;font-weight:700;letter-spacing:-0.13px;-webkit-text-stroke:0px currentColor;">20.4</div>
<div class="t" style="left:3024.2px;top:1313.0px;font-size:21.5px;color:#e9604b;font-weight:700;letter-spacing:3.23px;transform:scaleX(0.900);transform-origin:0.0px 0;">WORD COUNT</div>
<div class="t" style="left:3024.2px;top:1381.0px;font-size:33.49px;color:#e9604b;font-weight:700;letter-spacing:-0.83px;-webkit-text-stroke:0px currentColor;">6123</div>
<div class="b" style="left:2262.4px;top:1307.0px;width:2.0px;height:76.4px;background:#5b2b23"></div>
<div class="b" style="left:2609.6px;top:1307.0px;width:2.0px;height:76.4px;background:#5b2b23"></div>
<div class="b" style="left:2956.7px;top:1307.0px;width:2.0px;height:76.4px;background:#5b2b23"></div>
<div class="b" style="left:1936.8px;top:1581.3px;width:1413.2px;height:319.9px;background:#333333;border-radius:24px"></div>
<div class="t" style="left:1976.0px;top:1619.4px;font-size:21.5px;color:#a8a8a8;font-weight:700;letter-spacing:3.50px;transform:scaleX(0.880);transform-origin:0.0px 0;">ABOUT THE AUTHOR</div>
<div class="t" style="left:1976.0px;top:1672.6px;font-size:36.87px;color:#fff;font-weight:700;letter-spacing:-0.90px;">Kaz</div>
<div class="t" style="left:1976.0px;top:1739.4px;font-size:34px;color:#fff;font-weight:400;letter-spacing:-0.65px;">Self-taught, designer, programmer, entrepreneur, traveler, nomad. Kazakh.</div>
<div class="t" style="left:1976.0px;top:1802.0px;font-size:33.49px;color:#fff;font-weight:400;letter-spacing:-0.94px;">Learn more</div>
<div class="b" style="left:3106px;top:1647.6px;width:200.2px;height:200.2px;border-radius:13px;overflow:hidden"><div style="filter:blur(1.3px);width:200.2px;height:200.2px"><svg width="200.2" height="200.2"><use href="#kaz" width="200.2" height="200.2"/></svg></div></div>
<div class="t" style="left:1648.3px;top:2041.1px;font-size:27.58px;color:#9a9a9a;font-weight:400;letter-spacing:-0.90px;">0%</div>
<div class="t" style="left:2237.8px;top:2070.3px;font-size:30px;color:#e9604b;font-weight:400;letter-spacing:0.07px;">You are viewing a demo version.</div>
<div class="b" style="left:2690.6px;top:2052.7px;width:145.6px;height:77.3px;background:#333;border:3px solid #e9604b;border-radius:11px;box-sizing:border-box"></div>
<svg class="s" style="left:2720px;top:2068px" width="40" height="30" viewBox="0 0 40 30"><path d="M2 14c0-5 4-8 8-8h8l4-3c2-1 3 1 2 3l-2 2h16c2 0 2 4 0 4H24v3h-6v8c0 3-3 5-6 5h-2c-5 0-8-4-8-8z" fill="#f5c542" stroke="#c98f1d" stroke-width="1"/></svg>
<div class="t" style="left:2770.4px;top:2070.3px;font-size:30px;color:#e9604b;font-weight:400;letter-spacing:2.20px;">$9</div>
<div class="t" style="left:2852.6px;top:2070.3px;font-size:30px;color:#e9604b;font-weight:400;letter-spacing:0.35px;">for full access.</div>
<div class="b" style="left:3419.5px;top:2031.4px;width:92.4px;height:45.1px;border:2px solid #2c2c2c;border-radius:9px;box-sizing:border-box"></div>
<div class="t" style="left:3440.5px;top:2044.8px;font-size:21.82px;color:#fff;font-weight:400;letter-spacing:-0.30px;">EN</div>
<svg class="s" style="left:3479px;top:2050px" width="20" height="14" viewBox="0 0 20 14"><path d="M3 3 L10 10 L17 3" fill="none" stroke="#fff" stroke-width="2.4" stroke-linecap="round" stroke-linejoin="round"/></svg>
<svg class="s" style="left:3533px;top:2031px" width="34" height="34" viewBox="0 0 24 24"><path d="M12 2.5C6.8 2.5 2.5 6.6 2.5 11.8c0 5.1 4.2 9.7 9 9.7 1.3 0 1.9-.8 1.9-1.7 0-.5-.2-.9-.5-1.3-.3-.4-.5-.8-.5-1.3 0-1 .8-1.7 1.8-1.7h2.2c2.9 0 5.1-2.3 5.1-5.2C21.5 6 17.3 2.5 12 2.5z" fill="none" stroke="#fff" stroke-width="2"/><circle cx="6.9" cy="10.6" r="1.35" fill="#fff"/><circle cx="11.8" cy="7.2" r="1.35" fill="#fff"/><circle cx="16.7" cy="10.6" r="1.35" fill="#fff"/></svg>
<svg class="s" style="left:3611px;top:2033px" width="34" height="34" viewBox="0 0 34 34"><path d="M15.7 1.9H32.5V18.7Z M1.7 15.3V32.3H18.5Z" fill="#fff"/><path d="M28 6.5L19.5 15M6 28L14.5 19.5" stroke="#fff" stroke-width="3.6"/></svg>
<script>(function(){var w=window.innerWidth;if(w&&Math.abs(w-3720)>2){document.documentElement.style.zoom=(w/3720);}})();</script>
</body></html>
